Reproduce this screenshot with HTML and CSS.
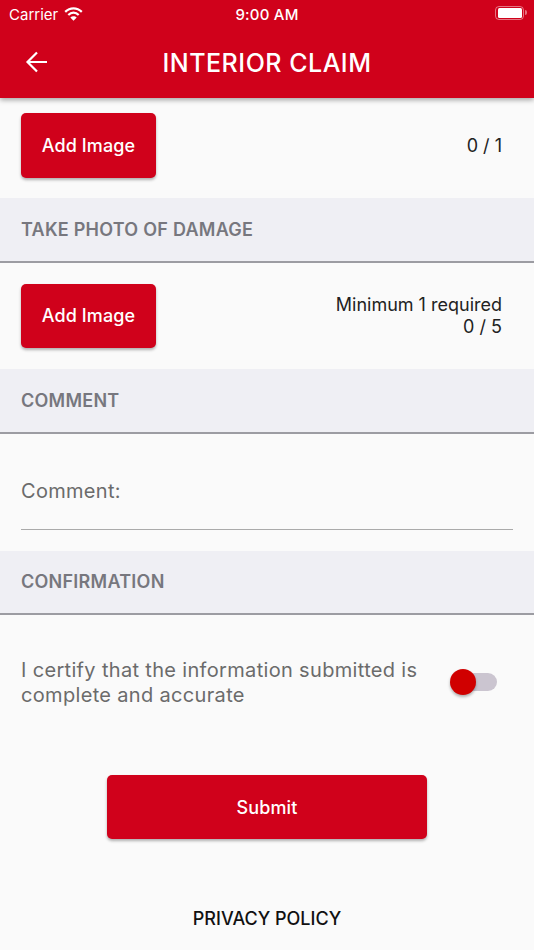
FILE: index.html
```html
<!DOCTYPE html>
<html lang="en">
<head>
<meta charset="utf-8">
<title>Interior Claim</title>
<link rel="stylesheet" href="styles.css">
</head>
<body>
<div class="screen">
  <header class="appbar">
    <div class="status">
      <div class="status-left">
        <span>Carrier</span>
        <svg class="wifi" width="19" height="14" viewBox="0 0 19 14"><g fill="none" stroke="#fff" stroke-width="2.200"><path d="M1.200 4.900C3.300 2.800 6.200 1.300 9.500 1.300s6.200 1.500 8.300 3.600"/><path d="M4.300 8C5.700 6.600 7.500 5.700 9.500 5.700S13.300 6.600 14.700 8"/></g><path fill="#fff" d="M9.500 13.800 6.300 10.500C7.200 9.700 8.300 9.200 9.500 9.200s2.300.5 3.200 1.300z"/></svg>
      </div>
      <span class="status-time">9:00 AM</span>
      <div class="battery"><span class="battery-fill"></span></div>
    </div>
    <div class="titlebar">
      <svg class="back" width="24" height="24" viewBox="0 0 24 24"><path fill="none" stroke="#fff" stroke-width="2.200" d="M22 12H3M12 2.500 2.500 12l9.500 9.500"/></svg>
      <h1>INTERIOR CLAIM</h1>
    </div>
  </header>

  <main class="content">
    <div class="upload first">
      <button class="btn add">Add Image</button>
      <div class="count">0 / 1</div>
    </div>

    <div class="section">TAKE PHOTO OF DAMAGE</div>
    <div class="upload second">
      <button class="btn add">Add Image</button>
      <div class="count">Minimum 1 required<br>0 / 5</div>
    </div>

    <div class="section">COMMENT</div>
    <div class="field"><span>Comment:</span></div>

    <div class="section">CONFIRMATION</div>
    <div class="certify">
      <p>I certify that the information submitted is complete and accurate</p>
      <div class="toggle"><span class="knob"></span></div>
    </div>

    <div class="submit-wrap"><button class="btn submit">Submit</button></div>
    <div class="privacy">PRIVACY POLICY</div>
  </main>
</div>
</body>
</html>
```
FILE: styles.css
```css
* { box-sizing: border-box; }
html, body { margin: 0; padding: 0; }
body { width: 534px; height: 950px; overflow: hidden; font-family: Inter, "Liberation Sans", sans-serif; background: #fafafa; }
.screen { width: 534px; height: 950px; display: flex; flex-direction: column; }

.appbar { height: 98px; background: #d0011b; color: #fff; box-shadow: 0 2px 5px rgba(0,0,0,.35); position: relative; z-index: 1; flex: none; }
.status { height: 28px; padding: 0 10px 0 9px; display: flex; align-items: center; justify-content: space-between; position: relative; font-size: 15px; }
.status-left { display: flex; align-items: center; gap: 6px; }
.wifi { margin-top: -1px; }
.status-time { position: absolute; left: 0; right: 0; text-align: center; font-weight: 500; letter-spacing: .2px; }
.battery { width: 29px; height: 14px; border: 1.500px solid rgba(255,255,255,.45); border-radius: 4px; padding: 1px 1.500px; position: relative; top: -1px; }
.battery::after { content: ""; position: absolute; right: -4px; top: 3px; width: 2px; height: 5px; background: rgba(255,255,255,.45); border-radius: 0 2px 2px 0; }
.battery-fill { display: block; height: 100%; background: #fff; border-radius: 1.500px; }

.titlebar { height: 70px; display: flex; align-items: center; justify-content: center; position: relative; }
.titlebar h1 { margin: 0; font-size: 25px; font-weight: 500; letter-spacing: .5px; line-height: 1; }
.back { position: absolute; left: 25px; top: 22px; }

.content { flex: 1; }
.upload { display: flex; align-items: center; justify-content: space-between; padding: 0 32px 0 21px; }
.upload.first { padding-top: 15px; padding-bottom: 20px; }
.upload.second { padding-top: 21px; padding-bottom: 21.500px; }
.btn { border: 0; background: #d0011b; color: #fff; font-family: inherit; font-weight: 500; font-size: 18px; letter-spacing: .1px; border-radius: 5px; box-shadow: 0 2px 3px rgba(0,0,0,.3); padding: 0; }
.add { width: 135px; height: 65px; }
.upload.second .add { height: 64px; }
.count { font-size: 18px; line-height: 22px; text-align: right; color: #222; }

.section { height: 64.500px; background: #efeff4; border-bottom: 2px solid #9c9ca2; padding: 0 21px; display: flex; align-items: center; font-size: 18px; font-weight: 600; color: #77777e; letter-spacing: .25px; }

.field { margin: 0 21px 21px; height: 96px; border-bottom: 1px solid #aaa; display: flex; padding-top: 43px; font-size: 20px; line-height: 28px; color: #6b6b6b; letter-spacing: .3px; }

.certify { display: flex; align-items: center; justify-content: space-between; padding: 42.500px 37px 0 21px; }
.certify p { margin: 0; width: 415px; font-size: 20px; line-height: 25px; color: #6b6b6b; letter-spacing: .33px; }
.toggle { width: 40px; height: 18px; background: #cbc5d0; border-radius: 9px; position: relative; flex: none; margin-top: -2px; }
.knob { position: absolute; left: -7px; top: -4px; width: 26px; height: 26px; border-radius: 50%; background: #d00000; box-shadow: 0 2px 3px rgba(0,0,0,.3); }

.submit-wrap { display: flex; justify-content: center; margin-top: 67.500px; }
.submit { width: 320px; height: 64px; }
.privacy { margin-top: 69px; text-align: center; font-size: 18px; font-weight: 500; line-height: 22px; color: #111; letter-spacing: 0; }
```
